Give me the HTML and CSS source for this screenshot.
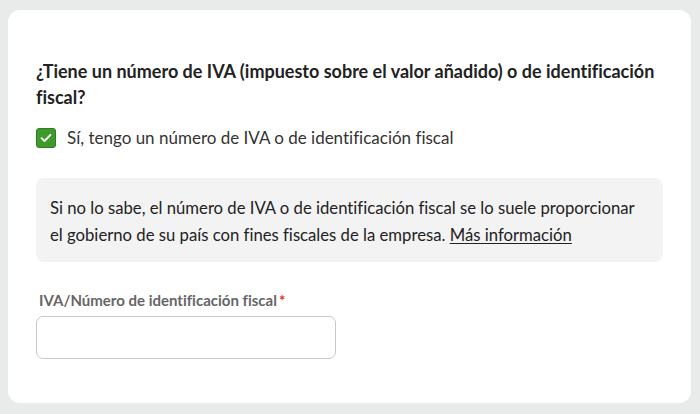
FILE: index.html
```html
<!DOCTYPE html>
<html lang="es">
<head>
<meta charset="utf-8">
<link rel="stylesheet" href="styles.css">
</head>
<body>
<div class="card">
  <h2 class="question">¿Tiene un número de IVA (impuesto sobre el valor añadido) o de identificación fiscal?</h2>
  <label class="check-row">
    <span class="checkbox"><svg width="12" height="10" viewBox="0 0 12 10"><path d="M1.5 5.2 L4.5 8 L10.5 1.8" fill="none" stroke="#fff" stroke-width="1.8" stroke-linecap="round" stroke-linejoin="round"/></svg></span>
    <span class="check-label">Sí, tengo un número de IVA o de identificación fiscal</span>
  </label>
  <p class="info">Si no lo sabe, el número de IVA o de identificación fiscal se lo suele proporcionar<br><span>el gobierno de su país con fines fiscales de la empresa.</span> <a class="link" href="#">Más información</a></p>
  <div class="field">
    <div class="field-label">IVA/Número de identificación fiscal<span class="req">*</span></div>
    <div class="input"></div>
  </div>
</div>
</body>
</html>
```

FILE: styles.css
```css
html, body { margin: 0; padding: 0; }
body {
  background: #e9eaea;
  width: 700px;
  height: 414px;
  font-family: Lato, "Open Sans", sans-serif;
  font-variant-ligatures: none;
  color: #222;
  padding: 10px 9px 11px 8px;
  box-sizing: border-box;
}
.card {
  background: #fff;
  border-radius: 12px;
  height: 393px;
  box-sizing: border-box;
  padding: 48px 28px 0 28px;
}
.question {
  margin: 0;
  font-size: 18px;
  font-weight: 700;
  line-height: 26px;
  color: #222;
  max-width: 627px;
}
.check-row {
  display: flex;
  align-items: center;
  gap: 11px;
  height: 20px;
  margin-top: 18px;
}
.checkbox {
  width: 20px;
  height: 20px;
  flex: none;
  box-sizing: border-box;
  border-radius: 3px;
  background: #3e9b2b;
  border: 1px solid #2f7f20;
  display: flex;
  align-items: center;
  justify-content: center;
}
.check-label {
  font-size: 17px;
  line-height: 20px;
  color: #333;
}
.info {
  margin: 30px 0 0 0;
  background: #f3f3f3;
  border-radius: 8px;
  padding: 17px 14px 13px 14px;
  font-size: 16.7px;
  line-height: 27px;
  color: #222;
  width: 627px;
  box-sizing: border-box;
}
.link { color: #222; text-decoration: underline; text-underline-offset: 2px; }
.field { margin-top: 29px; }
.field-label {
  font-size: 15px;
  font-weight: 700;
  color: #666;
  line-height: 18px;
  padding-left: 3px;
}
.req { color: #d9342b; margin-left: 2px; }
.input {
  margin-top: 7px;
  width: 300px;
  height: 43px;
  box-sizing: border-box;
  border: 1px solid #c9c9c9;
  border-radius: 7px;
  background: #fff;
}
```
